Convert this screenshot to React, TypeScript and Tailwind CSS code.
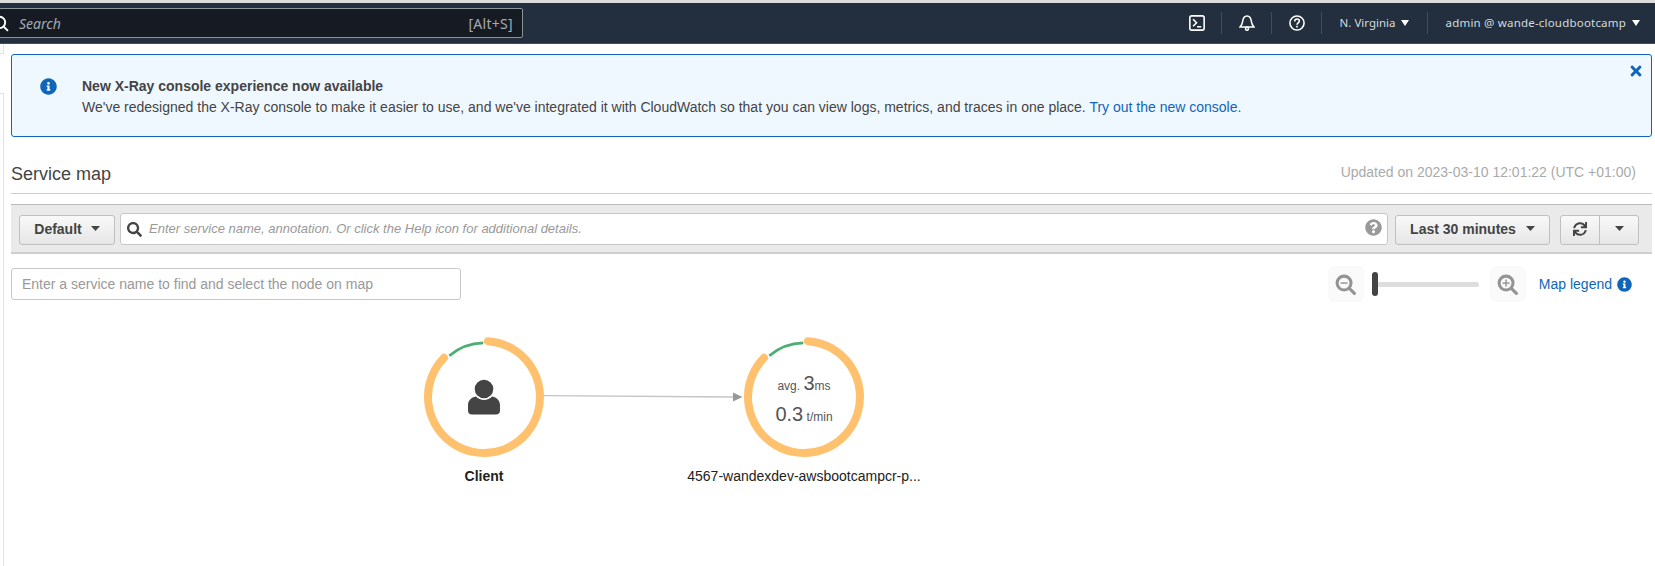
import React from "react";
import { FaInfoCircle, FaQuestionCircle, FaSearch, FaSync, FaTimes } from "react-icons/fa";

const Caret = ({ className = "" }: { className?: string }) => (
  <svg viewBox="0 0 10 7" preserveAspectRatio="none" className={className} fill="currentColor"><path d="M0 0h10L5 7z" /></svg>
);

const Sep = () => <div className="w-px h-[22px] bg-[#414d5c]" />;

const Magnifier = ({ sign }: { sign: "minus" | "plus" }) => (
  <div className="w-9 h-9 rounded-md bg-[#fafafa] flex items-center justify-center">
    <svg viewBox="0 0 22 22" className="w-[21px] h-[21px]" fill="none">
      <circle cx="9.5" cy="9.5" r="7.3" stroke="#949494" strokeWidth="3.2" />
      <path d="M15 15l5.3 5.3" stroke="#949494" strokeWidth="3.2" strokeLinecap="round" />
      <path d="M5.8 9.5h7.4" stroke="#999" strokeWidth="1.6" />
      {sign === "plus" && <path d="M9.5 5.8v7.4" stroke="#999" strokeWidth="1.6" />}
    </svg>
  </div>
);

const Ring = () => (
  <svg viewBox="0 0 124 124" className="w-[124px] h-[124px]" fill="none">
    <path d="M66 6.14 A56 56 0 1 1 22 22.8" stroke="#ffc16d" strokeWidth="8" strokeLinecap="round" />
    <path d="M27.3 20.7 A54.2 54.2 0 0 1 61.3 7.8" stroke="#4bae72" strokeWidth="2.8" />
  </svg>
);

const btn =
  "h-[30px] mt-[2px] rounded-[3px] border border-[#c0c0c0] bg-gradient-to-b from-[#f9f9f9] to-[#e6e6e6] flex items-center text-[#444] font-bold text-[14px]";

export default function App() {
  return (
    <div className="w-[1655px] h-[566px] overflow-hidden bg-white flex flex-col font-['Liberation_Sans',sans-serif] text-[#444]">
      <div className="h-[3px] bg-[#dcdcdc]" />
      <header className="h-[41px] bg-[#232f3e] border-b border-[#414d5c] flex items-center font-['Noto_Sans',sans-serif] text-white">
        <div className="ml-[-10px] w-[533px] h-[30px] bg-[#161b23] border border-[#879596] rounded-[2px] flex items-center pl-[1px] pr-[9px] text-[14px] text-[#a4abb3]">
          <svg viewBox="0 0 16 16" className="w-[17px] h-[17px] shrink-0" fill="none" stroke="#fff" strokeWidth="1.8">
            <circle cx="7" cy="7" r="5.4" />
            <path d="M11 11l4 4" />
          </svg>
          <span className="ml-[10px] italic">Search</span>
          <span className="ml-auto tracking-[0.3px]">[Alt+S]</span>
        </div>
        <div className="ml-auto flex items-center">
          <svg viewBox="0 0 17 17" className="w-4 h-4" fill="none" stroke="#fff" strokeWidth="1.7">
            <rect x="0.9" y="0.9" width="15.2" height="15.2" rx="2" />
            <path d="M4.3 4.5L8 8.3 4.3 12M8.5 12.5h4.5" />
          </svg>
          <div className="ml-4 mr-[17px]"><Sep /></div>
          <svg viewBox="0 0 16 16" className="w-4 h-4" fill="none" stroke="#fff" strokeWidth="1.5">
            <path d="M1 12h14c-1.8-1.8-2.3-3.2-2.6-5.4C12 3.4 10.3 1 8 1S4 3.4 3.6 6.6C3.3 8.8 2.8 10.2 1 12z" />
            <circle cx="8" cy="13.8" r="1.5" />
          </svg>
          <div className="ml-4 mr-[17px]"><Sep /></div>
          <svg viewBox="0 0 17 17" className="w-4 h-4" fill="none" stroke="#fff" strokeWidth="1.7">
            <circle cx="8.5" cy="8.5" r="7.5" />
            <path d="M6 6.8c0-1.6 1.1-2.5 2.5-2.5s2.5.9 2.5 2.2c0 2-2.5 1.9-2.5 3.9" />
            <path d="M8.5 11.5v1.7" />
          </svg>
          <div className="ml-4"><Sep /></div>
          <span className="ml-[18px] text-[11.5px] text-[#d5dbdb]">N. Virginia</span>
          <Caret className="ml-[5px] w-[8px] h-[6px] text-white" />
          <div className="ml-[18px]"><Sep /></div>
          <span className="ml-[18px] text-[11.5px] text-[#d5dbdb] tracking-[0.2px]">admin @ wande-cloudbootcamp</span>
          <Caret className="ml-[6px] w-[8px] h-[6px] text-white mr-[15px]" />
        </div>
      </header>

      <div className="flex-1 flex">
        <div className="w-[4px] flex flex-col">
          <div className="h-[10px] border-r border-b border-[#e3e3e3]" />
          <div className="flex-1 mt-[39px] border-r border-t border-[#e3e3e3]" />
        </div>
        <main className="flex-1 pl-[7px] pr-[3px] pt-[10px] flex flex-col">
          <section className="h-[83px] border border-[#0f66b8] rounded-[3px] bg-[#f0f8ff] flex relative">
            <FaInfoCircle className="w-[17px] h-[17px] mt-[23px] ml-[28px] shrink-0 text-[#0f66b8]" />
            <div className="ml-[25px] pt-[21px] text-[14px] leading-[20px] text-[#444]">
              <div className="font-bold">New X-Ray console experience now available</div>
              <div className="mt-[1px]">
                We've redesigned the X-Ray console to make it easier to use, and we've integrated it with CloudWatch so that you can view logs, metrics, and traces in one place.{" "}
                <a className="text-[#0f66b8]">Try out the new console.</a>
              </div>
            </div>
            <FaTimes className="absolute right-[7px] top-[8px] w-4 h-4 text-[#0f66b8]" />
          </section>

          <div className="mt-[18px] h-[39px] border-b border-[#ccc] flex justify-between items-start">
            <h1 className="text-[18px] leading-[24px] mt-[7px] font-normal text-[#444]">Service map</h1>
            <span className="text-[14px] leading-[20px] mt-[7px] mr-[16px] text-[#aaa]">Updated on 2023-03-10 12:01:22 (UTC +01:00)</span>
          </div>

          <div className="mt-[10px] h-[50px] bg-[#eaeaea] border-t border-[#bbb] border-b-2 border-b-[#cfcfcf] flex items-start pt-[8px] pl-[8px] pr-[13px]">
            <button className={`${btn} w-[96px] justify-center pb-[1px]`}>
              Default
              <Caret className="ml-[9px] mb-[2px] w-[9px] h-[5px] text-[#444]" />
            </button>
            <div className="ml-[5px] flex-1 h-[32px] bg-white border border-[#c8c8c8] rounded-[3px] flex items-center pl-[6px] pr-[5px]">
              <FaSearch className="w-[15px] h-[15px] shrink-0 text-[#444]" />
              <span className="ml-[7px] italic text-[13px] text-[#999]">Enter service name, annotation. Or click the Help icon for additional details.</span>
              <FaQuestionCircle className="ml-auto w-[17px] h-[17px] mb-[3px] text-[#999]" />
            </div>
            <button className={`${btn} ml-[7px] w-[155px] justify-center pb-[1px]`}>
              Last 30 minutes
              <Caret className="ml-[10px] mb-[2px] w-[9px] h-[5px] text-[#444]" />
            </button>
            <div className={`${btn} ml-[10px] w-[79px]`}>
              <div className="w-[39px] h-full flex items-center justify-center border-r border-[#c0c0c0]">
                <FaSync className="w-[14px] h-[14px] mb-[2px] text-[#444]" />
              </div>
              <div className="flex-1 flex items-center justify-center">
                <Caret className="w-[9px] h-[5px] mb-[3px] text-[#444]" />
              </div>
            </div>
          </div>

          <div className="mt-[14px] flex items-start pr-[20px]">
            <div className="w-[450px] h-[32px] border border-[#c8c8c8] rounded-[3px] flex items-center pl-[10px] text-[14px] text-[#999]">
              Enter a service name to find and select the node on map
            </div>
            <div className="ml-auto mt-[-2px] flex items-center">
              <Magnifier sign="minus" />
              <div className="ml-[8px] relative w-[107px] h-[24px] flex items-center">
                <div className="w-full h-[5px] rounded-full bg-[#ddd]" />
                <div className="absolute left-0 top-0 w-[6px] h-[24px] rounded-[3px] bg-[#444]" />
              </div>
              <div className="ml-[11px]"><Magnifier sign="plus" /></div>
              <a className="ml-[13px] text-[14px] text-[#0f66b8]">Map legend</a>
              <FaInfoCircle className="ml-[5px] w-[15px] h-[15px] mt-[1px] text-[#0f66b8]" />
            </div>
          </div>

          <div className="relative flex-1">
            <svg className="absolute left-0 top-0 w-[900px] h-[200px]" fill="none">
              <path d="M533 93.7L722 95" stroke="#c4c4c4" strokeWidth="1.3" />
              <path d="M722 90.5l9.5 4.5-9.5 4.5z" fill="#999" />
            </svg>
            <div className="absolute left-[411px] top-[33px]"><Ring /></div>
            <div className="absolute left-[731px] top-[33px]"><Ring /></div>

            <div className="absolute left-[456px] top-[77px]">
              <svg viewBox="0 0 34 36" className="w-[34px] h-[36px]" fill="#444">
                <circle cx="17" cy="10" r="9.3" />
                <path d="M9 17.5c2 2.3 5 3.5 8 3.5s6-1.2 8-3.5c5 .8 8 4 8 9v5c0 2.500-1.500 4-4 4H5c-2.500 0-4-1.500-4-4v-5c0-5 3-8.200 8-9z" />
              </svg>
            </div>
            <div className="absolute left-[393px] top-[164px] w-[160px] text-center font-bold text-[14px] leading-[20px] text-[#222]">Client</div>

            <div className="absolute left-[733px] top-[68px] w-[120px] text-center text-[#555]">
              <div className="leading-[26px] text-[12px]">avg. <span className="text-[20px]">3</span>ms</div>
              <div className="mt-[2px] leading-[26px] text-[12px]"><span className="text-[20px]">0.3</span> t/min</div>
            </div>
            <div className="absolute left-[673px] top-[164px] w-[240px] text-center text-[14px] leading-[20px] text-[#222]">4567-wandexdev-awsbootcampcr-p...</div>
          </div>
        </main>
      </div>
    </div>
  );
}
